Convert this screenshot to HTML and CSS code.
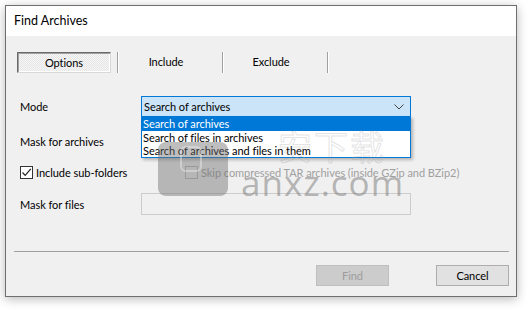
FILE: index.html
```html
<!DOCTYPE html>
<html>
<head>
<meta charset="utf-8">
<link rel="stylesheet" href="styles.css">
</head>
<body>
<div class="dialog">
  <div class="titlebar">Find Archives</div>
  <div class="content">
    <div class="tabs">
      <div class="tab active">Options</div>
      <div class="tab-sep"></div>
      <div class="tab">Include</div>
      <div class="tab-sep"></div>
      <div class="tab">Exclude</div>
      <div class="tab-sep"></div>
    </div>

    <div class="row row-mode">
      <div class="label">Mode</div>
      <div class="combo-wrap">
        <div class="combo">
          <span>Search of archives</span>
          <svg class="chev" width="10" height="6" viewBox="0 0 10 6"><path d="M0.5 0.5 L5 5 L9.5 0.5" fill="none" stroke="#444" stroke-width="1"/></svg>
        </div>
        <div class="droplist">
          <div class="opt sel">Search of archives</div>
          <div class="opt">Search of files in archives</div>
          <div class="opt">Search of archives and files in them</div>
        </div>
      </div>
    </div>

    <div class="row row-mask">
      <div class="label">Mask for archives</div>
      <div class="field"></div>
    </div>

    <div class="row row-check">
      <div class="check-item check-left">
        <span class="cb"><svg width="11" height="11" viewBox="0 0 11 11"><path d="M1.5 5.5 L4.2 8.3 L9.8 1.8" fill="none" stroke="#222" stroke-width="1.2"/></svg></span>
        <span>Include sub-folders</span>
      </div>
      <div class="check-item disabled">
        <span class="cb cb-dis"></span>
        <span>Skip compressed TAR archives (inside GZip and BZip2)</span>
      </div>
    </div>

    <div class="row row-files">
      <div class="label">Mask for files</div>
      <div class="field field-dis"></div>
    </div>

    <div class="hsep"></div>

    <div class="buttons">
      <div class="btn btn-dis">Find</div>
      <div class="btn">Cancel</div>
    </div>
  </div>
  <div class="watermark">
    <div class="wm-box"><div class="wm-inner"></div></div>
    <div class="wm-cn">安下载</div>
    <div class="wm-text">anxz.com</div>
  </div>
</div>
</body>
</html>
```

FILE: styles.css
```css
* { box-sizing: border-box; }
html, body { margin: 0; padding: 0; background: #fff; }
body {
  font-family: "Lato", "Noto Sans", sans-serif;
  font-size: 11px;
  letter-spacing: -0.05px;
  color: #000;
  width: 532px;
  height: 313px;
  overflow: hidden;
}
.dialog {
  position: relative;
  margin: 5px 0 0 5px;
  width: 512px;
  height: 292px;
  border: 1px solid #6e6e6e;
  box-shadow: 0 2px 10px rgba(0,0,0,0.28);
  background: #f0f0f0;
  display: flex;
  flex-direction: column;
}
.titlebar {
  height: 30px;
  background: #fff;
  padding-left: 8px;
  font-size: 12.5px;
  letter-spacing: 0;
  line-height: 29px;
}
.content {
  flex: 1;
  position: relative;
  padding-top: 16px;
}
.tabs {
  display: flex;
  align-items: center;
  height: 21px;
  padding-left: 11px;
}
.tab {
  width: 94px;
  height: 21px;
  line-height: 20px;
  text-align: center;
  margin-right: 9px;
}
.tab.active {
  margin-right: 6px;
  border-top: 1px solid #6a6a6a;
  border-left: 1px solid #6a6a6a;
  border-right: 1px solid #d8d8d8;
  border-bottom: 1px solid #d8d8d8;
  box-shadow: inset 1px 1px 0 #a0a0a0, inset -1px -1px 0 #fff;
  background-color: #f0f0f0;
  background-image: repeating-conic-gradient(#e6e6e6 0 25%, #f6f6f6 0 50%);
  background-size: 2px 2px;
}
.tab-sep {
  width: 2px;
  height: 21px;
  border-left: 1px solid #a0a0a0;
  border-right: 1px solid #fff;
}
.row {
  display: flex;
  align-items: center;
  padding-left: 14px;
}
.label {
  width: 121px;
}
.row-mode { margin-top: 23px; height: 21px; }
.row-mask { margin-top: 13px; height: 22px; }
.row-check { margin-top: 13px; height: 14px; }
.row-files { margin-top: 14px; height: 22px; }
.combo-wrap {
  position: relative;
  width: 270px;
  height: 21px;
  z-index: 2;
}
.combo {
  height: 21px;
  border: 1px solid #0078d7;
  background: #cce4f7;
  display: flex;
  align-items: center;
  justify-content: space-between;
  padding: 0 6px 0 2px;
  line-height: 19px;
}
.chev { margin-top: 1px; }
.droplist {
  position: absolute;
  left: 0;
  top: 20px;
  width: 270px;
  background: #fff;
  border: 1px solid #0078d7;
  box-shadow: 2px 2px 3px rgba(0,0,0,0.25);
}
.opt {
  height: 13px;
  line-height: 13px;
  padding-left: 1px;
  white-space: nowrap;
}
.opt.sel {
  background: #0078d7;
  color: #fff;
  height: 14px;
}
.field {
  width: 270px;
  height: 22px;
  background: #fff;
  border: 1px solid #7a7a7a;
}
.field-dis {
  background: #f0f0f0;
  border-color: #cccccc;
}
.check-item {
  display: flex;
  align-items: center;
  white-space: nowrap;
}
.check-left { width: 165px; }
.cb {
  width: 13px;
  height: 13px;
  border: 1px solid #333;
  background: #fff;
  display: inline-flex;
  align-items: center;
  justify-content: center;
  margin-right: 3px;
}
.cb-dis { border-color: #bcbcbc; background: #f0f0f0; }
.disabled { color: #a0a0a0; }
.hsep {
  margin: 36px 7px 0 8px;
  height: 1px;
  background: #a0a0a0;
}
.buttons {
  display: flex;
  justify-content: flex-end;
  gap: 47px;
  padding-right: 7px;
  margin-top: 13px;
}
.btn {
  width: 73px;
  height: 21px;
  line-height: 19px;
  text-align: center;
  background: #e1e1e1;
  border: 1px solid #adadad;
}
.btn-dis {
  background: #cccccc;
  border-color: #bfbfbf;
  color: #9c9c9c;
}
.watermark {
  position: absolute;
  left: 0;
  top: 0;
  width: 100%;
  height: 100%;
  pointer-events: none;
  z-index: 5;
}
.wm-box {
  position: absolute;
  left: 152px;
  top: 136px;
  width: 70px;
  height: 54px;
  border-radius: 8px;
  background: rgba(110,110,110,0.45);
}
.wm-inner {
  position: absolute;
  left: 22px;
  top: 4px;
  width: 22px;
  height: 26px;
  border: 2px solid rgba(255,255,255,0.35);
  border-radius: 6px;
}
.wm-cn {
  position: absolute;
  left: 272px;
  top: 120px;
  font-family: "Noto Sans CJK SC", sans-serif;
  font-size: 34px;
  line-height: 40px;
  color: transparent;
  -webkit-text-stroke: 1px rgba(160,160,160,0.3);
  letter-spacing: 2px;
}
.wm-text {
  position: absolute;
  left: 235px;
  top: 157px;
  font-family: "Open Sans", sans-serif;
  font-size: 35px;
  line-height: 40px;
  color: rgba(120,120,120,0.5);
  letter-spacing: 1px;
}
```
